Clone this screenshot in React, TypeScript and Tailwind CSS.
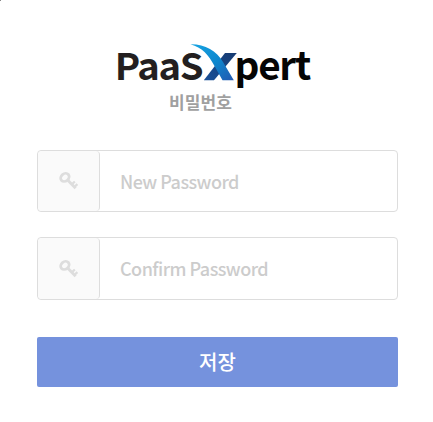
function Logo() {
  return (
    <svg width="200" height="52" viewBox="116 41 200 52" className="block overflow-visible" role="img" aria-label="PaaSXpert">
      <defs>
        <linearGradient id="swoosh" x1="0" y1="0" x2="1" y2="1">
          <stop offset="0" stopColor="#16a5e3" />
          <stop offset="0.55" stopColor="#0d86cd" />
          <stop offset="1" stopColor="#2358b0" />
        </linearGradient>
        <linearGradient id="stroke" x1="1" y1="0" x2="0" y2="1">
          <stop offset="0" stopColor="#173a70" />
          <stop offset="1" stopColor="#185099" />
        </linearGradient>
      </defs>
      <text x="114.8" y="80.3" fontSize="37" fontWeight="700" fill="#231f20" letterSpacing="-1.3" textLength="87.5" lengthAdjust="spacingAndGlyphs" fontFamily="'Noto Sans CJK KR', sans-serif">
        PaaS
      </text>
      <path d="M225 53H236.8L214 80.3H203.8Z" fill="url(#stroke)" />
      <path d="M190.5 44.2C205 44 216.5 50.5 223 62L233.8 80.3H222.5L214.5 66C208.5 54.5 202 47.5 190.5 44.2Z" fill="url(#swoosh)" />
      <text x="234.5" y="80.3" fontSize="39.5" fontWeight="700" fill="#050505" letterSpacing="-1.3" textLength="75.5" lengthAdjust="spacingAndGlyphs" fontFamily="'Noto Sans CJK KR', sans-serif">
        pert
      </text>
    </svg>
  );
}

function KeyIcon() {
  return (
    <svg width="20" height="20" viewBox="0 0 20 20" fill="none" stroke="#dddddd" className="block">
      <ellipse cx="5.9" cy="6.4" rx="4.5" ry="3.7" strokeWidth="2.8" transform="rotate(-40 5.9 6.4)" />
      <path d="M8.6 9L16.6 17.2" strokeWidth="2.9" />
      <path d="M12.8 13.4L15.8 10.5M15.4 16L18.4 13.1" strokeWidth="2.2" />
    </svg>
  );
}

function PasswordField({ label }: { label: string }) {
  return (
    <div className="flex h-full w-full overflow-hidden rounded-[4px] border border-[#dddddd] bg-white">
      <div className="flex w-[62px] shrink-0 items-center justify-center rounded-[4px] border-r border-[#dddddd] bg-[#fafafa]">
        <KeyIcon />
      </div>
      <input
        type="password"
        placeholder={label}
        aria-label={label}
        className="min-w-0 flex-1 bg-transparent px-5 text-[18px] font-medium tracking-[-0.53px] outline-none placeholder:text-[#cccccc]"
      />
    </div>
  );
}

export default function App() {
  return (
    <main className="h-[422px] w-[433px] overflow-hidden bg-white font-['Noto_Sans_CJK_KR',sans-serif]">
      <div className="h-px w-px bg-[#888888]" />
      <form className="flex flex-col pr-[35px] pl-[37px] pt-10">
        <header className="flex h-[109px] flex-col">
          <div className="ml-[79px]">
            <Logo />
          </div>
          <h1 className="ml-[132px] h-5 text-[17px] leading-[18px] font-bold tracking-[0.1px] text-[#a0a0a0]">비밀번호</h1>
        </header>
        <div className="h-[62px]">
          <PasswordField label="New Password" />
        </div>
        <div className="mt-[25px] h-[63px]">
          <PasswordField label="Confirm Password" />
        </div>
        <button type="button" className="mt-[37px] h-[50px] rounded-[2px] bg-[#7592dd] text-[20px] font-medium text-white">
          저장
        </button>
      </form>
    </main>
  );
}
